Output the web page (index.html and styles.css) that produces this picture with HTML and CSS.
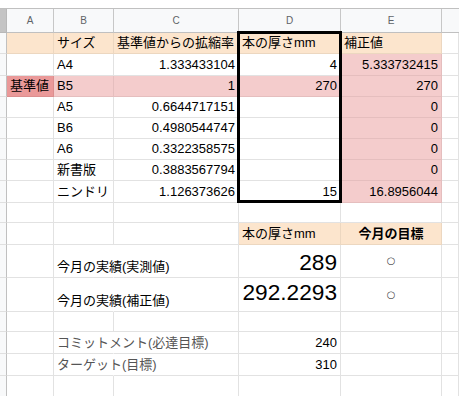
FILE: index.html
```html
<!DOCTYPE html>
<html lang="ja">
<head>
<meta charset="utf-8">
<title>Sheet</title>
<link rel="stylesheet" href="styles.css">
</head>
<body>
<div class="sheet">
  <!-- column header -->
  <div class="corner"></div>
  <div class="ch">A</div><div class="ch">B</div><div class="ch">C</div><div class="ch">D</div><div class="ch">E</div><div class="ch last"></div>

  <!-- 1 -->
  <div class="rh"></div>
  <div class="c o"></div><div class="c o">サイズ</div><div class="c o">基準値からの拡縮率</div><div class="c o">本の厚さmm</div><div class="c o">補正値</div><div class="c"></div>
  <!-- 2 -->
  <div class="rh"></div>
  <div class="c"></div><div class="c">A4</div><div class="c r">1.333433104</div><div class="c r">4</div><div class="c r p">5.333732415</div><div class="c"></div>
  <!-- 3 -->
  <div class="rh"></div>
  <div class="c pk">基準値</div><div class="c p">B5</div><div class="c r p">1</div><div class="c r p">270</div><div class="c r p">270</div><div class="c"></div>
  <!-- 4 -->
  <div class="rh"></div>
  <div class="c"></div><div class="c">A5</div><div class="c r">0.6644717151</div><div class="c"></div><div class="c r p">0</div><div class="c"></div>
  <!-- 5 -->
  <div class="rh"></div>
  <div class="c"></div><div class="c">B6</div><div class="c r">0.4980544747</div><div class="c"></div><div class="c r p">0</div><div class="c"></div>
  <!-- 6 -->
  <div class="rh"></div>
  <div class="c"></div><div class="c">A6</div><div class="c r">0.3322358575</div><div class="c"></div><div class="c r p">0</div><div class="c"></div>
  <!-- 7 -->
  <div class="rh"></div>
  <div class="c"></div><div class="c">新書版</div><div class="c r">0.3883567794</div><div class="c"></div><div class="c r p">0</div><div class="c"></div>
  <!-- 8 -->
  <div class="rh"></div>
  <div class="c"></div><div class="c">ニンドリ</div><div class="c r">1.126373626</div><div class="c r">15</div><div class="c r p">16.8956044</div><div class="c"></div>
  <!-- 9 -->
  <div class="rh"></div>
  <div class="c"></div><div class="c"></div><div class="c"></div><div class="c"></div><div class="c"></div><div class="c"></div>
  <!-- 10 -->
  <div class="rh"></div>
  <div class="c"></div><div class="c"></div><div class="c"></div><div class="c o">本の厚さmm</div><div class="c o ctr b">今月の目標</div><div class="c"></div>
  <!-- 11 -->
  <div class="rh"></div>
  <div class="c"></div><div class="c ov">今月の実績(実測値)</div><div class="c"></div><div class="c r big">289</div><div class="c ctr mid circ">○</div><div class="c"></div>
  <!-- 12 -->
  <div class="rh"></div>
  <div class="c"></div><div class="c ov">今月の実績(補正値)</div><div class="c"></div><div class="c r big big2">292.2293</div><div class="c ctr mid circ">○</div><div class="c"></div>
  <!-- 13 -->
  <div class="rh"></div>
  <div class="c"></div><div class="c"></div><div class="c"></div><div class="c"></div><div class="c"></div><div class="c"></div>
  <!-- 14 -->
  <div class="rh"></div>
  <div class="c"></div><div class="c ov gray">コミットメント(必達目標)</div><div class="c"></div><div class="c r">240</div><div class="c"></div><div class="c"></div>
  <!-- 15 -->
  <div class="rh"></div>
  <div class="c"></div><div class="c ov gray">ターゲット(目標)</div><div class="c"></div><div class="c r">310</div><div class="c"></div><div class="c"></div>
  <!-- 16 -->
  <div class="rh"></div>
  <div class="c"></div><div class="c"></div><div class="c"></div><div class="c"></div><div class="c"></div><div class="c"></div>

  <div class="sel"></div>
</div>
</body>
</html>
```

FILE: styles.css
```css
html, body {
  margin: 0;
  padding: 0;
  background: #fff;
  overflow: hidden;
}
body {
  font-family: "Liberation Sans", Arial, "Noto Sans CJK JP", sans-serif;
  font-size: 13px;
  color: #000;
}
.sheet {
  position: relative;
  margin-top: 8px;
  border-top: 1px solid #c0c0c0;
  display: grid;
  grid-template-columns: 7px 47px 60px 125px 102px 101px 1fr;
  grid-template-rows: 24px 21px 22px 21px 21px 21px 21px 21px 22px 20px 22px 33px 34px 20px 22px 22px 21px;
}
.sheet > div {
  box-sizing: border-box;
  min-width: 0;
}
.corner {
  background: #c4c4c4;
  border-right: 1px solid #b8b8b8;
  border-bottom: 1px solid #b8b8b8;
}
.ch {
  background: #f8f9fa;
  border-right: 1px solid #c7c7c7;
  border-bottom: 1px solid #c0c0c0;
  display: flex;
  align-items: center;
  justify-content: center;
  font-size: 10px;
  color: #5f6368;
}
.ch.last { border-right: none; }
.rh {
  background: #f8f9fa;
  border-right: 1px solid #c0c0c0;
  border-bottom: 1px solid #e0e0e0;
}
.c {
  border-right: 1px solid #e2e2e2;
  border-bottom: 1px solid #e2e2e2;
  display: flex;
  align-items: flex-end;
  justify-content: flex-start;
  padding: 0 3px 2px 3px;
  line-height: 16px;
  white-space: nowrap;
}
.r { justify-content: flex-end; }
.ctr { justify-content: center; }
.mid { align-items: center; padding-bottom: 0; }
.o { background: #fce5cd; border-color: #ecd7c0; }
.p { background: #f4cccc; border-color: #e5bebe; }
.pk { background: #ea9999; border-color: #dc8e8e; }
.ov { border-right-color: transparent; }
.b { font-weight: bold; }
.gray { color: #555; }
.big {
  font-size: 22.67px;
  line-height: 26px;
  padding-bottom: 2px;
}
.big2 { padding-bottom: 6px; }
.circ {
  font-family: "DejaVu Sans", sans-serif;
  font-size: 10px;
  color: #444;
}
.sel {
  position: absolute;
  grid-column: 5 / 6;
  grid-row: 2 / 10;
  top: -2px;
  left: -2px;
  right: -1px;
  bottom: 0;
  border: 3px solid #000;
  z-index: 1;
}
```
